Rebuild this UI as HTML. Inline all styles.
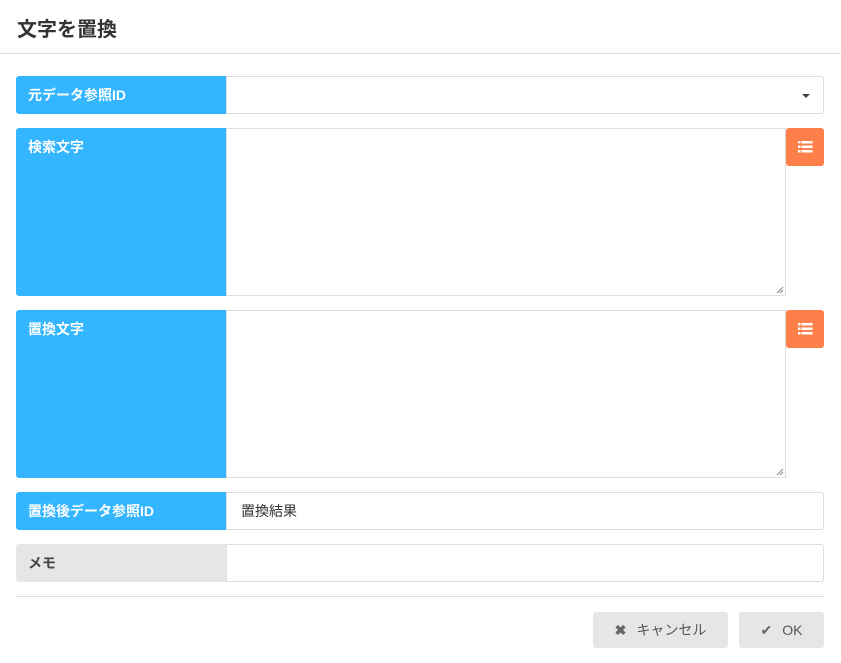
<!DOCTYPE html>
<html><head><meta charset="utf-8"><style>
*{box-sizing:border-box;margin:0;padding:0}
body{width:841px;height:663px;background:#fff;font-family:"Liberation Sans","Noto Sans CJK JP",sans-serif;position:relative;overflow:hidden}
.a{position:absolute}
.lbl{position:absolute;left:16px;width:210px;background:#33b5ff;color:#fff;font-weight:bold;font-size:14px;padding-left:12px;border-radius:3px 0 0 3px}
.in{position:absolute;left:226px;border:1px solid #ddd;background:#fff}
.ob{position:absolute;left:786px;width:38px;height:38px;background:#ff7f4a;border-radius:3px}
.btn{position:absolute;top:612px;height:36px;background:#e6e6e6;border-radius:3px;color:#555;font-size:14px;line-height:36px;text-align:center}
.grip{position:absolute;right:1px;bottom:1px}
</style></head><body>
<div class="a" style="left:17px;top:13px;font-size:20px;font-weight:bold;color:#333">文字を置換</div>
<div class="a" style="left:0;top:53px;width:841px;height:1px;background:#ddd"></div>

<div class="lbl" style="top:76px;height:38px;line-height:38px">元データ参照ID</div>
<div class="in" style="top:76px;width:598px;height:38px;border-radius:0 3px 3px 0"></div>
<div class="a" style="left:802px;top:94px;width:0;height:0;border-left:4px solid transparent;border-right:4px solid transparent;border-top:4px solid #444"></div>

<div class="lbl" style="top:128px;height:168px;padding-top:9px">検索文字</div>
<div class="in" style="top:128px;width:560px;height:168px"><svg class="grip" width="8" height="8"><path d="M1 7L7 1M4 7L7 4" stroke="#888" stroke-width="1"/></svg></div>
<div class="ob" style="top:128px"><svg width="38" height="38"><g fill="#fff"><rect x="12" y="13" width="2.5" height="2.5"/><rect x="15.5" y="13" width="11" height="2.5"/><rect x="12" y="17.5" width="2.5" height="2.5"/><rect x="15.5" y="17.5" width="11" height="2.5"/><rect x="12" y="22" width="2.5" height="2.5"/><rect x="15.5" y="22" width="11" height="2.5"/></g></svg></div>

<div class="lbl" style="top:310px;height:168px;padding-top:9px">置換文字</div>
<div class="in" style="top:310px;width:560px;height:168px"><svg class="grip" width="8" height="8"><path d="M1 7L7 1M4 7L7 4" stroke="#888" stroke-width="1"/></svg></div>
<div class="ob" style="top:310px"><svg width="38" height="38"><g fill="#fff"><rect x="12" y="13" width="2.5" height="2.5"/><rect x="15.5" y="13" width="11" height="2.5"/><rect x="12" y="17.5" width="2.5" height="2.5"/><rect x="15.5" y="17.5" width="11" height="2.5"/><rect x="12" y="22" width="2.5" height="2.5"/><rect x="15.5" y="22" width="11" height="2.5"/></g></svg></div>

<div class="lbl" style="top:492px;height:38px;line-height:38px">置換後データ参照ID</div>
<div class="in" style="top:492px;width:598px;height:38px;border-radius:0 3px 3px 0;font-size:14px;color:#333;line-height:36px;padding-left:14px">置換結果</div>

<div class="lbl" style="top:544px;height:38px;line-height:38px;background:#e6e6e6;color:#444">メモ</div>
<div class="in" style="top:544px;width:598px;height:38px;border-radius:0 3px 3px 0"></div>

<div class="a" style="left:16px;top:596px;width:808px;height:1px;background:#ddd"></div>
<div class="btn" style="left:593px;width:135px"><b style="color:#666;margin-right:10px">✖</b>キャンセル</div>
<div class="btn" style="left:739px;width:85px"><span style="color:#666;margin-right:10px">✔</span>OK</div>
</body></html>
